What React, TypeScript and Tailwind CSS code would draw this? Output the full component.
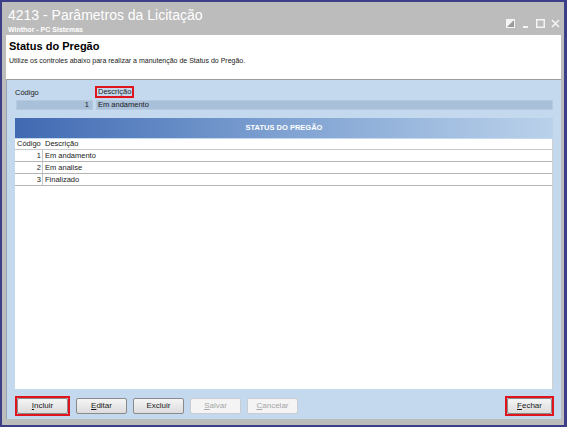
import React from 'react';

type Row = { codigo: number; descricao: string };

const rows: Row[] = [
    { codigo: 1, descricao: 'Em andamento' },
    { codigo: 2, descricao: 'Em analise' },
    { codigo: 3, descricao: 'Finalizado' },
];

const font = { fontFamily: '"Liberation Sans", Arial, sans-serif' };

// Window caption buttons (pin, minimise, maximise, close)
const CaptionButtons: React.FC = () => (
    <div className="flex items-center gap-[6px] pt-[9px] pr-[4px]">
        <svg width="9" height="9" viewBox="0 0 9 9">
            <rect x="0.5" y="0.5" width="8" height="8" fill="#f4f4f4" stroke="#f4f4f4" />
            <path d="M1 8 L8 1 L8 8 Z" fill="#9a9a9a" />
        </svg>
        <svg width="9" height="9" viewBox="0 0 9 9">
            <rect x="2" y="7" width="5" height="2" fill="#f4f4f4" />
        </svg>
        <svg width="9" height="9" viewBox="0 0 9 9">
            <rect x="0.75" y="0.75" width="7.5" height="7.5" fill="none" stroke="#f4f4f4" strokeWidth="1.5" />
        </svg>
        <svg width="9" height="9" viewBox="0 0 9 9">
            <path d="M1 1 L8 8 M8 1 L1 8" stroke="#f4f4f4" strokeWidth="1.6" />
        </svg>
    </div>
);

interface ButtonProps {
    label: string;
    hotkey?: number;
    disabled?: boolean;
    highlighted?: boolean;
}

const ToolButton: React.FC<ButtonProps> = ({ label, hotkey, disabled, highlighted }) => {
    const text =
        hotkey === undefined ? (
            label
        ) : (
            <>
                {label.slice(0, hotkey)}
                <span className="underline">{label[hotkey]}</span>
                {label.slice(hotkey + 1)}
            </>
        );

    const button = (
        <div
            className={
                'w-[51px] h-[16px] flex items-center justify-center rounded-[2px] border text-[8px] ' +
                (disabled
                    ? 'border-[#c9ccd0] bg-[#f4f4f4] text-[#a6a6a6]'
                    : 'border-[#8a8a8a] bg-gradient-to-b from-[#f5f5f5] to-[#dcdcdc] text-[#1a1a1a]')
            }
        >
            {text}
        </div>
    );

    if (!highlighted) return button;
    return <div className="border-2 border-[#e0141c]">{button}</div>;
};

export default function App() {
    return (
        <div className="w-[567px] h-[427px] bg-[#3c3e88] pt-[2px] pl-[2px] pr-[3px] pb-[2px]" style={font}>
            <div className="w-full h-full flex flex-col bg-[#bcbcbc]">
                {/* Title bar */}
                <div className="h-[33px] flex justify-between shrink-0">
                    <div className="pl-[6px] pt-[5px]">
                        <div className="text-[14px] leading-[17px] text-white">4213 - Parâmetros da Licitação</div>
                        <div className="text-[7px] leading-[9px] font-bold text-white mt-[1px]">Winthor - PC Sistemas</div>
                    </div>
                    <CaptionButtons />
                </div>

                <div className="flex-1 flex flex-col pl-[4px] pr-[3px] pb-[6px]">
                    {/* Header */}
                    <div className="h-[45px] bg-white border-b border-[#9c9c9c] pl-[3px] pt-[4px] shrink-0">
                        <div className="text-[11px] leading-[14px] font-bold text-black">Status do Pregão</div>
                        <div className="text-[7px] leading-[9px] text-[#222] mt-[3px]">
                            Utilize os controles abaixo para realizar a manutenção de Status do Pregão.
                        </div>
                    </div>

                    {/* Main panel */}
                    <div className="flex-1 flex flex-col bg-[#c5d9ee] px-[8px] border-l border-[#9aa4b0]">
                        <div className="flex items-end mt-[6px] h-[12px] text-[7.5px] text-[#1a1a1a]">
                            <div className="w-[80px]">Código</div>
                            <div className="border-2 border-[#e0141c] px-[1px] leading-[8px]">Descrição</div>
                        </div>
                        <div className="flex gap-[3px] mt-[2px] h-[10px] text-[7.5px] text-[#1a1a1a]">
                            <div className="w-[77px] ml-[1px] bg-[#a9c0da] border border-[#b7c9dd] flex items-center justify-end pr-[3px]">
                                1
                            </div>
                            <div className="flex-1 bg-[#a9c0da] border border-[#b7c9dd] flex items-center pl-[1px]">
                                Em andamento
                            </div>
                        </div>

                        {/* Grid */}
                        <div className="mt-[8px] h-[20px] flex items-center justify-center bg-gradient-to-r from-[#4069b2] via-[#7fa2d2] to-[#bad1ea] text-white font-bold text-[7.5px]">
                            STATUS DO PREGÃO
                        </div>
                        <div className="h-[250px] bg-white mt-[1px] text-[7.5px] text-[#1a1a1a] border-r border-[#d0d0d0]">
                            <div className="flex h-[11px] items-center border-b border-[#c8c8c8]">
                                <div className="w-[28px] pl-[2px]">Código</div>
                                <div className="pl-[2px]">Descrição</div>
                            </div>
                            {rows.map((r) => (
                                <div key={r.codigo} className="flex h-[12px] items-center border-b border-[#b5b5b5]">
                                    <div className="w-[28px] text-right pr-[1px] border-r border-[#c8c8c8] h-full flex items-center justify-end">
                                        {r.codigo}
                                    </div>
                                    <div className="pl-[2px]">{r.descricao}</div>
                                </div>
                            ))}
                        </div>

                        {/* Buttons */}
                        <div className="flex items-center justify-between mt-[7px]">
                            <div className="flex items-center gap-[6px]">
                                <ToolButton label="Incluir" hotkey={0} highlighted />
                                <ToolButton label="Editar" hotkey={0} />
                                <ToolButton label="Excluir" />
                                <ToolButton label="Salvar" hotkey={0} disabled />
                                <ToolButton label="Cancelar" hotkey={0} disabled />
                            </div>
                            <div className="border-2 border-[#e0141c] -mr-[1px]">
                                <div className="w-[45px] h-[16px] flex items-center justify-center rounded-[2px] border border-[#8a8a8a] bg-gradient-to-b from-[#f5f5f5] to-[#dcdcdc] text-[8px] text-[#1a1a1a]">
                                    <span className="underline">F</span>echar
                                </div>
                            </div>
                        </div>
                    </div>
                </div>
            </div>
        </div>
    );
}
